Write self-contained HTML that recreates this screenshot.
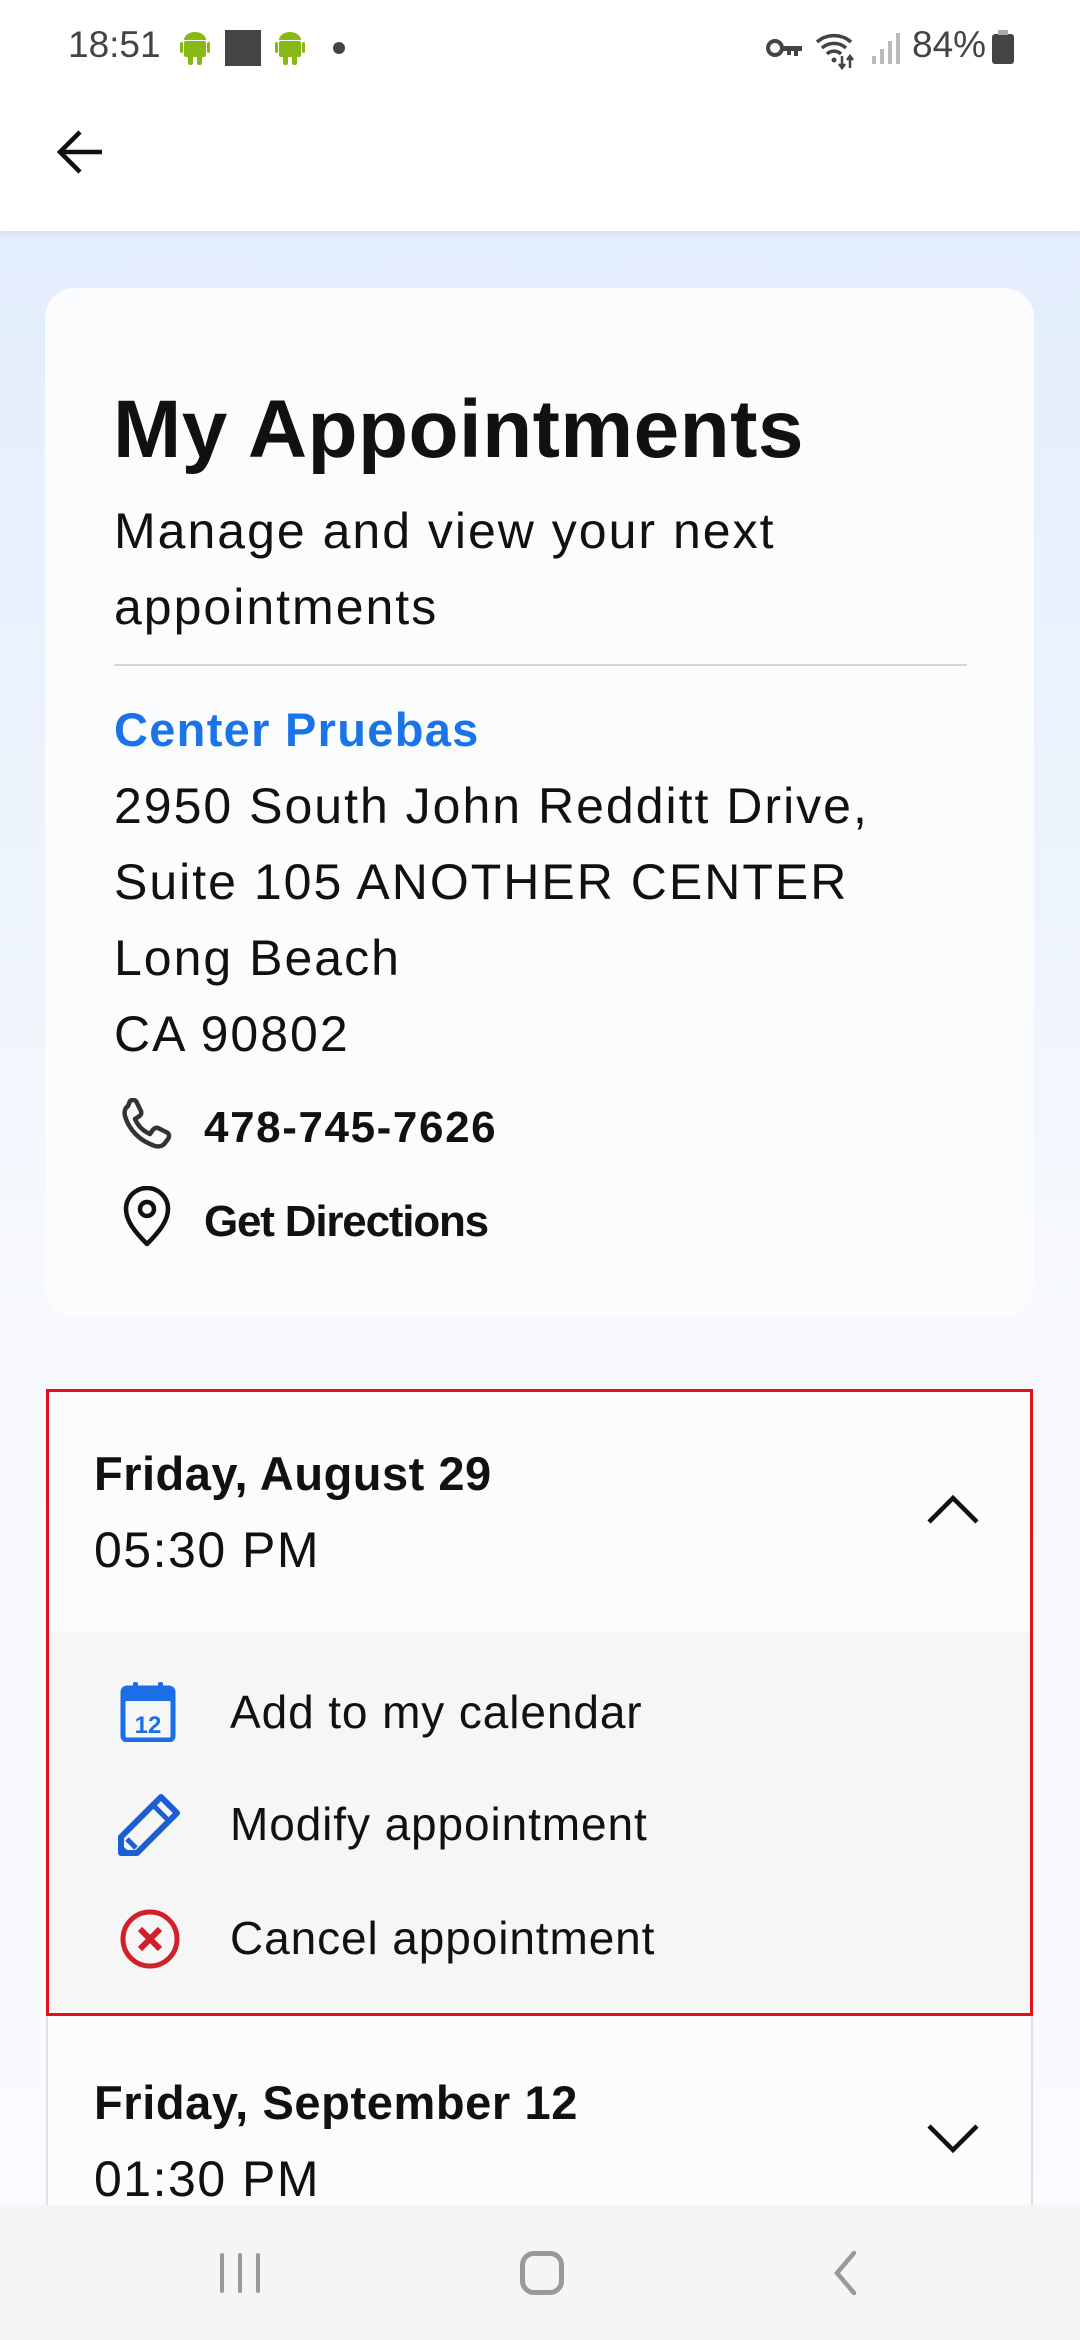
<!DOCTYPE html>
<html><head><meta charset="utf-8"><style>
*{margin:0;padding:0;box-sizing:border-box}
body{width:1080px;height:2340px;overflow:hidden;position:relative;font-family:"Liberation Sans",sans-serif;color:#111;background:linear-gradient(#e3eefc 232px,#eef4fd 900px,#f7f9fd 1300px,#fafbfe 2340px)}
.a{position:absolute;white-space:nowrap}
.t{font-size:50px;letter-spacing:2px;line-height:76px}
.b{font-weight:bold}
</style></head><body>
<div class="a" style="left:0;top:0;width:1080px;height:231px;background:#fff;box-shadow:0 2px 6px rgba(0,0,0,0.08)"></div>
<div class="a" style="left:68px;top:24px;font-size:37px;color:#444">18:51</div>
<svg class="a" style="left:180px;top:32px" width="30" height="34" viewBox="0 0 30 34"><rect x="4" y="9" width="22" height="16" rx="2" fill="#86b816"/><rect x="8" y="22" width="5" height="11" rx="2" fill="#86b816"/><rect x="17" y="22" width="5" height="11" rx="2" fill="#86b816"/><path d="M4 8a11 8 0 0 1 22 0z" fill="#86b816"/><rect x="0" y="10" width="3" height="11" rx="1.5" fill="#86b816"/><rect x="27" y="10" width="3" height="11" rx="1.5" fill="#86b816"/></svg>
<div class="a" style="left:225px;top:30px;width:36px;height:36px;background:#444"></div>
<svg class="a" style="left:275px;top:32px" width="30" height="34" viewBox="0 0 30 34"><rect x="4" y="9" width="22" height="16" rx="2" fill="#86b816"/><rect x="8" y="22" width="5" height="11" rx="2" fill="#86b816"/><rect x="17" y="22" width="5" height="11" rx="2" fill="#86b816"/><path d="M4 8a11 8 0 0 1 22 0z" fill="#86b816"/><rect x="0" y="10" width="3" height="11" rx="1.5" fill="#86b816"/><rect x="27" y="10" width="3" height="11" rx="1.5" fill="#86b816"/></svg>
<div class="a" style="left:333px;top:42px;width:12px;height:12px;border-radius:6px;background:#444"></div>
<svg class="a" style="left:766px;top:36px" width="38" height="24" viewBox="0 0 38 24"><circle cx="9" cy="12" r="7" fill="none" stroke="#444" stroke-width="4"/><path d="M16 10h20v5h-4v5h-4v-5h-3v4h-4v-4h-5z" fill="#444"/></svg>
<svg class="a" style="left:815px;top:30px" width="44" height="40" viewBox="0 0 44 40"><path d="M2 12a26 26 0 0 1 34 0M7 18a18 18 0 0 1 24 0M12 24a10 10 0 0 1 14 0" fill="none" stroke="#444" stroke-width="3.5"/><circle cx="19" cy="30" r="2.5" fill="#444"/><path d="M27 26v12M24 34l3 4 3-4M35 38v-12M32 30l3-4 3 4" fill="none" stroke="#444" stroke-width="2.5"/></svg>
<svg class="a" style="left:870px;top:32px" width="30" height="32" viewBox="0 0 30 32"><rect x="2" y="24" width="4" height="8" fill="#bbb"/><rect x="10" y="17" width="4" height="15" fill="#bbb"/><rect x="18" y="9" width="4" height="23" fill="#bbb"/><rect x="26" y="1" width="4" height="31" fill="#bbb"/></svg>
<div class="a" style="left:912px;top:24px;font-size:37px;color:#444">84%</div>
<div class="a" style="left:992px;top:34px;width:22px;height:30px;border-radius:3px;background:#444"></div>
<div class="a" style="left:998px;top:30px;width:10px;height:5px;background:#aaa"></div>
<svg class="a" style="left:54px;top:128px" width="50" height="48" viewBox="0 0 50 48"><path d="M48 24H6M26 4L6 24l20 20" fill="none" stroke="#111" stroke-width="4.5"/></svg>

<div class="a" style="left:45px;top:288px;width:989px;height:1029px;background:#fbfcfe;border-radius:30px"></div>
<div class="a b" style="left:113px;top:380px;font-size:82px;line-height:100px;letter-spacing:0.4px">My Appointments</div>
<div class="a t" style="left:114px;top:493px">Manage and view your next</div>
<div class="a t" style="left:114px;top:569px">appointments</div>
<div class="a" style="left:114px;top:664px;width:853px;height:2px;background:#d6d6d6"></div>
<div class="a t b" style="left:114px;top:692px;color:#1a73e8;font-size:47px;letter-spacing:1.3px">Center Pruebas</div>
<div class="a t" style="left:114px;top:768px">2950 South John Redditt Drive,</div>
<div class="a t" style="left:114px;top:844px">Suite 105 ANOTHER CENTER</div>
<div class="a t" style="left:114px;top:920px">Long Beach</div>
<div class="a t" style="left:114px;top:996px">CA 90802</div>
<svg class="a" style="left:118px;top:1098px" width="58" height="56" viewBox="0 0 58 56"><path d="M12 3c3-2 6-1 7 2l4 8c1 3-1 5-3 6l-3 2c3 7 8 12 15 15l2-3c1-2 4-4 6-3l8 4c3 1 4 4 2 7l-3 4c-2 3-6 4-10 3C22 43 11 32 7 18c-1-4 0-8 3-10z" fill="none" stroke="#333" stroke-width="4.5" stroke-linejoin="round"/></svg>
<div class="a b" style="left:204px;top:1092px;font-size:44px;line-height:72px;letter-spacing:1.6px">478-745-7626</div>
<svg class="a" style="left:122px;top:1186px" width="50" height="62" viewBox="0 0 50 62"><path d="M25 58C13 46 4 35 4 23a21 21 0 0 1 42 0c0 12-9 23-21 35z" fill="none" stroke="#111" stroke-width="4.5" stroke-linejoin="round"/><circle cx="25" cy="23" r="7" fill="none" stroke="#111" stroke-width="4.5"/></svg>
<div class="a b" style="left:204px;top:1186px;font-size:44px;line-height:72px;letter-spacing:-1.2px">Get Directions</div>

<div class="a" style="left:46px;top:1389px;width:987px;height:627px;border:3px solid #e0131d;background:#fcfcfe"></div>
<div class="a" style="left:49px;top:1632px;width:981px;height:381px;background:#f6f6f6"></div>
<div class="a t b" style="left:94px;top:1436px;font-size:47px;letter-spacing:0.5px">Friday, August 29</div>
<div class="a t" style="left:94px;top:1512px;letter-spacing:1.5px">05:30 PM</div>
<svg class="a" style="left:926px;top:1492px" width="54" height="34" viewBox="0 0 54 34"><path d="M3 30L27 6l24 24" fill="none" stroke="#111" stroke-width="4.5"/></svg>
<svg class="a" style="left:120px;top:1680px" width="58" height="62" viewBox="0 0 58 62"><rect x="3" y="8" width="50" height="52" rx="4" fill="none" stroke="#1a6ee8" stroke-width="5"/><rect x="3" y="8" width="50" height="13" fill="#1a6ee8"/><rect x="13" y="2" width="5" height="12" rx="2" fill="#1a6ee8"/><rect x="38" y="2" width="5" height="12" rx="2" fill="#1a6ee8"/><text x="28" y="53" font-family="Liberation Sans" font-weight="bold" font-size="24" fill="#1a6ee8" text-anchor="middle">12</text></svg>
<div class="a" style="left:230px;top:1674px;font-size:46px;line-height:76px;letter-spacing:0.9px">Add to my calendar</div>
<svg class="a" style="left:117px;top:1792px" width="66" height="66" viewBox="0 0 66 66"><path d="M44 5l16 16L20 61H4V45z" fill="none" stroke="#1a5fd6" stroke-width="6" stroke-linejoin="round"/><path d="M36 13l16 16M10 47l9 9" stroke="#1a5fd6" stroke-width="5"/><path d="M4 52v9h9z" fill="#1a5fd6"/></svg>
<div class="a" style="left:230px;top:1786px;font-size:46px;line-height:76px;letter-spacing:0.9px">Modify appointment</div>
<svg class="a" style="left:119px;top:1908px" width="62" height="62" viewBox="0 0 62 62"><circle cx="31" cy="31" r="27" fill="none" stroke="#d2202a" stroke-width="5"/><path d="M21 21l20 20M41 21L21 41" stroke="#d2202a" stroke-width="6"/></svg>
<div class="a" style="left:230px;top:1900px;font-size:46px;line-height:76px;letter-spacing:0.9px">Cancel appointment</div>

<div class="a" style="left:46px;top:2016px;width:987px;height:200px;border-left:2px solid #e2e2e2;border-right:2px solid #e2e2e2;background:#fcfcfe"></div>
<div class="a t b" style="left:94px;top:2065px;font-size:47px;letter-spacing:0.6px">Friday, September 12</div>
<div class="a t" style="left:94px;top:2141px;letter-spacing:1.5px">01:30 PM</div>
<svg class="a" style="left:926px;top:2122px" width="54" height="34" viewBox="0 0 54 34"><path d="M3 4l24 24L51 4" fill="none" stroke="#111" stroke-width="4.5"/></svg>

<div class="a" style="left:0;top:2205px;width:1080px;height:135px;background:#f5f5f5"></div>
<div class="a" style="left:220px;top:2253px;width:4px;height:40px;background:#999;border-radius:2px"></div>
<div class="a" style="left:238px;top:2253px;width:4px;height:40px;background:#999;border-radius:2px"></div>
<div class="a" style="left:256px;top:2253px;width:4px;height:40px;background:#999;border-radius:2px"></div>
<div class="a" style="left:520px;top:2251px;width:44px;height:44px;border:5px solid #999;border-radius:14px"></div>
<svg class="a" style="left:830px;top:2250px" width="30" height="46" viewBox="0 0 30 46"><path d="M24 3L7 23l17 20" fill="none" stroke="#999" stroke-width="4.5" stroke-linecap="round"/></svg>
</body></html>
